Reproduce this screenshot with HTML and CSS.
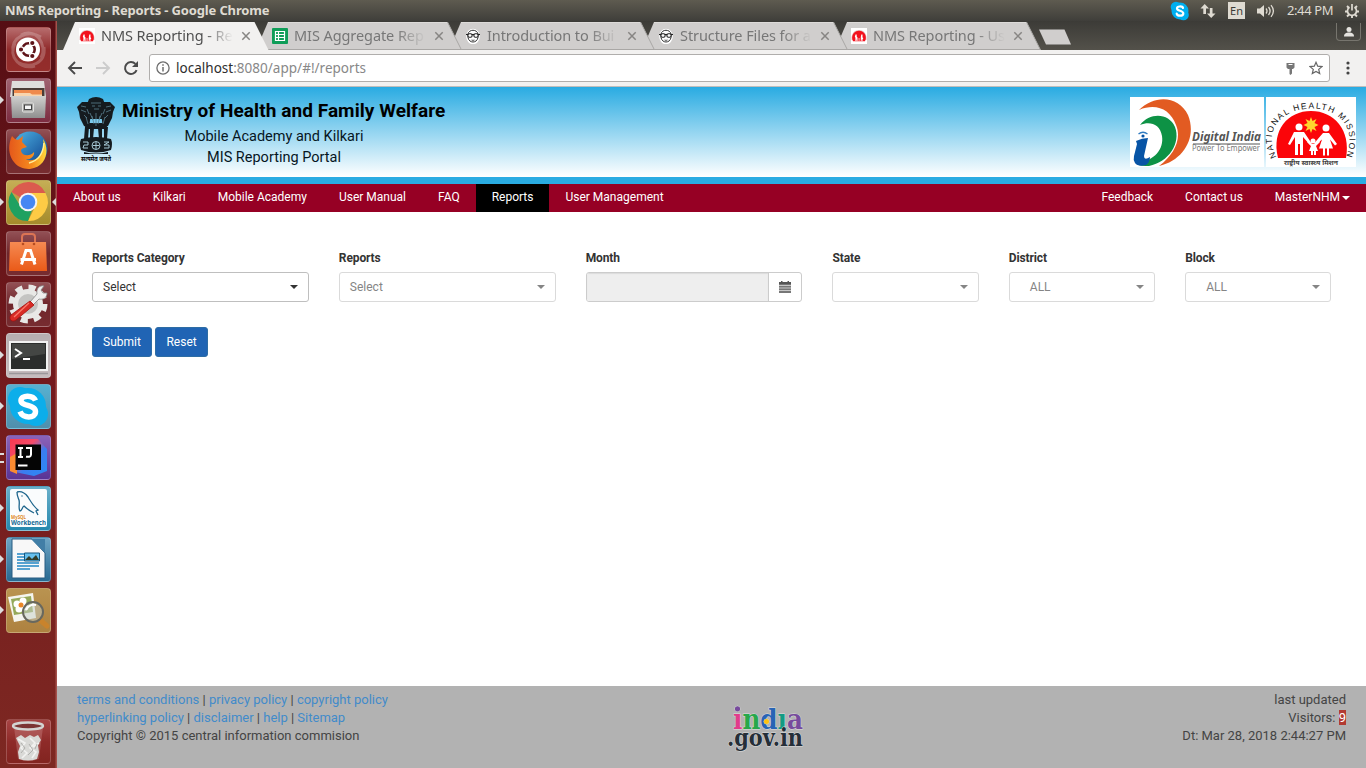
FILE: index.html
```html
<!DOCTYPE html>
<html lang="en">
<head>
<meta charset="utf-8">
<title>NMS Reporting - Reports</title>
<link rel="stylesheet" href="styles.css">
</head>
<body>
<svg class="defs" width="0" height="0" aria-hidden="true">
  <defs>
    <linearGradient id="steel" x1="0" y1="0" x2="0" y2="1"><stop offset="0" stop-color="#d0d0ce"/><stop offset="1" stop-color="#8f8f8f"/></linearGradient>
    <linearGradient id="globe" x1="0" y1="0" x2="1" y2="1"><stop offset="0" stop-color="#50b8e8"/><stop offset="1" stop-color="#0b3a86"/></linearGradient>
    <linearGradient id="fox" x1="0" y1="0" x2="1" y2="0"><stop offset="0" stop-color="#e4581b"/><stop offset=".6" stop-color="#f68a1e"/><stop offset="1" stop-color="#ffd93b"/></linearGradient>
    <linearGradient id="bag" x1="0" y1="0" x2="0" y2="1"><stop offset="0" stop-color="#f58a52"/><stop offset="1" stop-color="#ea5a18"/></linearGradient>
    <linearGradient id="ij" x1="0" y1="0" x2="1" y2="1"><stop offset="0" stop-color="#f8394f"/><stop offset=".35" stop-color="#f54b6a"/><stop offset=".6" stop-color="#3b7cf0"/><stop offset="1" stop-color="#2a8cf5"/></linearGradient>
    <symbol id="nhm-mini" viewBox="0 0 16 16"><path fill="#fff" d="M0 0h16v16H0z"/><path d="M.5 12C0 6 3 2 8 2s8 4 7.500 10z" fill="#e5bcbc"/><path d="M2 13.200C-.5 8 3 2.800 8 2.800S16.500 8 14 13.200z" fill="#f3121d"/><path d="M4.500 6.500h1.200v2l.8 1v3.500H5.700v-2.500L5.200 13h-.8V9.500L3.800 9zM10.300 6.500h1.200v2.500l.8 2-.8.3V13h-.6v-2l-.5 2h-.6V9zM7.700 10h.7V13h-.7z" fill="#fff"/></symbol>
    <symbol id="face" viewBox="0 0 16 16"><ellipse cx="8" cy="8.500" rx="5.800" ry="6.800" fill="#fff" stroke="#fff" stroke-width="2"/><path d="M3 6C4 1 12 1 13 6v3.500c-1 6-9 6-10 0z" fill="#fff" stroke="#333" stroke-width="1"/><path d="M1 6.500h14" stroke="#222" stroke-width="1.100" fill="none"/><rect x="2.900" y="5.800" width="4.200" height="3.400" rx="1.500" fill="#fff" stroke="#222" stroke-width="1.100"/><rect x="8.900" y="5.800" width="4.200" height="3.400" rx="1.500" fill="#fff" stroke="#222" stroke-width="1.100"/><path d="M6.500 12q1.500.8 3 0" stroke="#555" fill="none"/></symbol>
    <symbol id="tab-off" viewBox="0 0 206 28"><path d="M0 28 12 0h179.500L205.500 28z" fill="#d0cecd"/><path d="M0 27.500h205M191.500 0l14 28" stroke="#a9a7a5" fill="none"/><path d="M12 .5h179" stroke="#dddbd9"/></symbol>
    <symbol id="tab-on" viewBox="0 0 206 28"><path d="M0 28 12 0h179.500L205.500 28z" fill="#f2f1f0"/></symbol>
    <symbol id="close" viewBox="0 0 10 10"><path d="m1.300 1.300 7.400 7.400m0-7.400L1.300 8.700" stroke="#878583" stroke-width="1.500"/></symbol>
  </defs>
</svg>

<header class="panel">
  <div class="panel-title">NMS Reporting - Reports - Google Chrome</div>
  <div class="indicators">
    <svg class="ind-skype" viewBox="0 0 20 20"><circle cx="6" cy="6" r="5.300" fill="#00aff0"/><circle cx="13.500" cy="14" r="5.300" fill="#00aff0"/><circle cx="10" cy="10" r="8.500" fill="#00aff0"/><path d="M13 7C12.500 5 7 4.800 7 7.400S13.300 9.600 13.300 12.400C13.300 15.500 7.200 15.200 6.700 12.700" fill="none" stroke="#fff" stroke-width="2.200" stroke-linecap="round"/></svg>
    <svg class="ind-net" viewBox="0 0 16 14"><path d="M4.700 0 9 4.600H6V10H3.300V4.600H.5zM11.200 14 7 9.400h2.800V4h2.700v5.400h3z" fill="#dfdbd2"/></svg>
    <span class="ind-lang">En</span>
    <svg class="ind-vol" viewBox="0 0 18 14"><path d="M0 4.500h3L7 1v12L3 9.500H0z" fill="#dfdbd2"/><path d="M9 4.500q2 2.500 0 5M11.500 3q3.200 4 0 8M14 1.200q4.800 5.800 0 11.600" fill="none" stroke="#dfdbd2" stroke-width="1.300"/></svg>
    <span class="ind-time">2:44 PM</span>
    <svg class="ind-gear" viewBox="0 0 14 14"><path d="M4.500 3.200a4.500 4.500 0 1 0 5 0M7 0v6.500" fill="none" stroke="#dfdbd2" stroke-width="1.700"/><path d="M2 2l2 2m8-2-2 2M0 7.500h2.500m9 0H14M2 12.500l2-2m8 2-2-2M7 12v2" stroke="#dfdbd2" stroke-width="1.900"/></svg>
  </div>
</header>

<div class="desktop">
  <aside class="launcher">
    <div class="tile ubuntu"><svg viewBox="0 0 45 45"><path d="M7 25C5 10 22 2 35 10M38 20c2 17-14 22-27 15M15 8C30 0 42 18 35 31M29 39C14 43 2 30 9 16" stroke="#fff" stroke-opacity=".22" stroke-width="3" fill="none"/><circle cx="22" cy="22.500" r="12" fill="#fff"/><circle cx="22.500" cy="22.500" r="6.200" stroke="#5e1419" stroke-width="2.600" fill="none"/><g fill="#5e1419" stroke="#fff" stroke-width="1.200"><circle cx="15" cy="22.500" r="2.700"/><circle cx="26.300" cy="16" r="2.700"/><circle cx="26.300" cy="29" r="2.700"/></g></svg></div>
    <div class="tile files running"><svg viewBox="0 0 45 45"><path d="M6 3h32l2 16H4z" fill="#dededc"/><path d="M6.500 10h32v9h-32z" fill="#4a3c36"/><path d="M8 12h28v6H8z" fill="#ef8a4c"/><path d="M8 15h16l2 1.500h10V19H8z" fill="#f8d5ae"/><path d="M5 18h35l-1 22H6z" fill="url(#steel)"/><rect x="16.500" y="25" width="11" height="9" rx="1" fill="#a5a5a3" stroke="#e2e2e0"/><rect x="18.500" y="27" width="7" height="4.500" fill="#f5f5f5" stroke="#444"/></svg></div>
    <div class="tile firefox"><svg viewBox="0 0 45 45"><circle cx="24" cy="20" r="17.500" fill="url(#globe)"/><path d="M6 7q2 3 6 4l5-4-1 6 5 5c-3 1-6 1-6 4 1 5 9 6 13 1 1 5-5 9-10 7 12 5 22-5 19-20 7 10 4 28-13 30C8 41-2 24 6 7z" fill="url(#fox)"/><path d="M38 14c-1 12-7 18-15 20" fill="none" stroke="#fff09a" stroke-width="1.500"/></svg></div>
    <div class="tile chrome running focused"><svg viewBox="0 0 45 45"><path d="M22 22 5.500 12A19 19 0 0 1 39.500 13H22z" fill="#db5b4e"/><path d="M22 13h17.500A19 19 0 0 1 22 41L30 25z" fill="#fdcb45"/><path d="M5.500 12 15 27l7 3 5 -3 -5 14A19 19 0 0 1 5.500 12z" fill="#1fa161"/><circle cx="22" cy="22" r="9.300" fill="#f4f4f4"/><circle cx="22" cy="22" r="7.300" fill="#4587f3"/></svg></div>
    <div class="tile software"><svg viewBox="0 0 45 45"><path d="M16 14V6q0-3 3-3h7q3 0 3 3v8" fill="none" stroke="#dc7454" stroke-width="2"/><path d="M4 11h36l1 29H3z" fill="url(#bag)"/><path d="M15.500 33.500 20 19.500h4.500L29 33.500M14.500 28.500h15.500" fill="none" stroke="#fff" stroke-width="3"/><circle cx="17" cy="13" r="1.300" fill="#b74c21"/><circle cx="28" cy="13" r="1.300" fill="#b74c21"/></svg></div>
    <div class="tile settings"><svg viewBox="0 0 45 45"><circle cx="22" cy="22" r="15" fill="#e8e8e6"/><circle cx="22" cy="22" r="16.500" fill="none" stroke="#e8e8e6" stroke-width="6" stroke-dasharray="7 5.960"/><circle cx="22" cy="22" r="10" fill="#c4c4c2"/><path d="m24 20 7-8c-1-6 3-9 7-8l-3 4 2 3h4c0 5-4 7-8 6l-6 6z" fill="#eee" stroke="#888" stroke-width=".8"/><path d="m24 19 4 4-18 15c-4 3-8-1-5-5z" fill="#d82b25" stroke="#a3100f" stroke-width=".8"/><path d="m23 21-15 14" stroke="#f9796a" stroke-width="1.300"/></svg></div>
    <div class="tile terminal running"><svg viewBox="0 0 45 45"><path d="M3 8h39v30H3z" fill="#f1f1f1"/><path d="M5 10h35v26H5z" fill="#2b2d2c"/><path d="M6 11h33v10L6 26z" fill="#444644"/><path d="m9 16 6 4-6 4M17 26h7" fill="none" stroke="#fff" stroke-width="2"/><path d="M3 40.500h39" stroke="#9b979a" stroke-width="1.500"/></svg></div>
    <div class="tile skype running"><svg viewBox="0 0 45 45"><circle cx="14" cy="15" r="12" fill="#0caeea"/><circle cx="30" cy="30" r="12" fill="#0caeea"/><circle cx="22" cy="22" r="18" fill="#0caeea"/><path d="M29.500 16.500C27 10.500 15 11 15 16.500c0 6 14.500 4 14.500 11 0 7.500-13 7-15.500 0" fill="none" stroke="#fff" stroke-width="5.500"/></svg></div>
    <div class="tile idea running two"><svg viewBox="0 0 45 45"><path d="M4 4h28l9 10v22L28 41 4 36z" fill="url(#ij)"/><path d="m4 22 7-4v21l-7-3z" fill="#f98b31"/><path d="M9.500 9.500h25.500v25.500H9.500z" fill="#050505"/><path d="M12 13h5M14.500 13v9M12 22h5M20 13h5v6.500q0 3-5 2.200" fill="none" stroke="#fff" stroke-width="2"/><path d="M12 30.500h9.500" stroke="#fff" stroke-width="2"/></svg></div>
    <div class="tile mysql running"><svg viewBox="0 0 45 45"><rect x="4" y="3" width="37" height="38" rx="2" fill="#fafcfd"/><path d="M11 6c4-1 8 1 11 5 3 5 5 9 10 13l-2 1 2 4M11 6c0 4 1 5 2 8 1 4-1 8 1 11 2 0 2-4 4-5 3 3 6 5 10 7" fill="none" stroke="#1d658c" stroke-width="1.300"/><circle cx="16" cy="10" r=".7" fill="#1d658c"/><text x="5" y="33" class="my" textLength="15" lengthAdjust="spacingAndGlyphs">MySQL</text><text x="5" y="39" class="wb" textLength="35" lengthAdjust="spacingAndGlyphs">Workbench</text></svg></div>
    <div class="tile writer running"><svg viewBox="0 0 45 45"><path d="M6 2h20l13 14v25H6z" fill="#f8f8f8" stroke="#285d82"/><path d="M25 2h14v14z" fill="#417ea6"/><path d="M11 17h7m-7 3h7m-7 3h7m-7 3h22M11 29h22M11 32h13" stroke="#2286c3" stroke-width="1.500"/><path d="M18.500 16h15v8h-15z" fill="#65bfed" stroke="#155881"/><path d="m19 23 4-4 3 3 4-4 3 5z" fill="#313c29"/></svg></div>
    <div class="tile viewer running"><svg viewBox="0 0 45 45"><path d="m2 9 25-4 3 25-22 4z" fill="#f5f5ef"/><path d="m5 11 20-3 2 16-19 3z" fill="#95a95a"/><g fill="#fff"><circle cx="11" cy="16" r="3.500"/><circle cx="17" cy="13" r="3.500"/><circle cx="19" cy="19" r="3.500"/><circle cx="13" cy="21" r="3.500"/></g><circle cx="15" cy="17" r="2.500" fill="#e98728"/><path d="m34 32 7 6" stroke="#c9832c" stroke-width="5" stroke-linecap="round"/><circle cx="27" cy="24" r="10" fill="#c6d0c8" fill-opacity=".5" stroke="#68685f" stroke-width="2"/><path d="M20 22q3-6 10-5" stroke="#fff" stroke-width="2" fill="none"/></svg></div>
    <div class="tile trash"><svg viewBox="0 0 45 45"><path d="M8 8 12 40q10 4 21 0L37 8z" fill="#e7b5b5" fill-opacity=".25"/><path d="m10 19 5-3 4 3 5-3 4 2 4-2 3 5-3 5 1 7-2 7q-9 3-18 0l-1-7 2-6z" fill="#d9d9d6"/><path d="m12 20 7 4-4 5 6 5-5 5m8-20 5 5-5 5 6 4-4 6m7-15-6 4" fill="none" stroke="#f2f2f0" stroke-width="1.600"/><path d="m15 24 4 5-4 5m8-9 4 6-5 5m9-11-2 5" fill="none" stroke="#b0b0ad"/><ellipse cx="22" cy="7" rx="15" ry="3.500" fill="#7b3433" stroke="#d4d4d2" stroke-width="2.300"/></svg></div>
  </aside>

  <div class="browser">
    <div class="tabstrip">
      <div class="tab on t1"><svg class="tab-bg"><use href="#tab-on"/></svg><svg class="fav"><use href="#nhm-mini"/></svg><span class="tab-label">NMS Reporting - Re</span><svg class="x"><use href="#close"/></svg></div>
      <div class="tab t2"><svg class="tab-bg"><use href="#tab-off"/></svg><svg class="fav" viewBox="0 0 16 16"><rect width="16" height="16" rx="1" fill="#0f9d58"/><path d="M3.500 3.500h9v9h-9zM3.500 6.500h9M3.500 9.500h9M6.500 3.500v9" fill="none" stroke="#fff" stroke-width="1.200"/></svg><span class="tab-label">MIS Aggregate Rep</span><svg class="x"><use href="#close"/></svg></div>
      <div class="tab t3"><svg class="tab-bg"><use href="#tab-off"/></svg><svg class="fav"><use href="#face"/></svg><span class="tab-label">Introduction to Bui</span><svg class="x"><use href="#close"/></svg></div>
      <div class="tab t4"><svg class="tab-bg"><use href="#tab-off"/></svg><svg class="fav"><use href="#face"/></svg><span class="tab-label">Structure Files for a</span><svg class="x"><use href="#close"/></svg></div>
      <div class="tab t5"><svg class="tab-bg"><use href="#tab-off"/></svg><svg class="fav"><use href="#nhm-mini"/></svg><span class="tab-label">NMS Reporting - Us</span><svg class="x"><use href="#close"/></svg></div>
      <svg class="newtab" viewBox="0 0 34 16"><path d="M1 .5h25.500L33 15.500H8z" fill="#d0cecd"/></svg>
      <div class="profile"><svg viewBox="0 0 12 12"><circle cx="6" cy="3.500" r="2.500" fill="#e5e3df"/><path d="M1 10.500c0-3 2-4 5-4s5 1 5 4z" fill="#e5e3df"/></svg></div>
    </div>
    <div class="toolbar">
      <svg class="back" viewBox="0 0 16 16"><path d="M15 8H2m6-6L2 8l6 6" fill="none" stroke="#4a4a4a" stroke-width="1.900"/></svg>
      <svg class="fwd" viewBox="0 0 16 16"><path d="M1 8h13M8 2l6 6-6 6" fill="none" stroke="#ccc" stroke-width="1.900"/></svg>
      <svg class="reload" viewBox="0 0 16 16"><path d="M13.600 10.200a6 6 0 1 1-1.200-6.300" fill="none" stroke="#4a4a4a" stroke-width="2"/><path d="M15 1v6H9z" fill="#4a4a4a"/></svg>
      <div class="omnibox">
        <svg class="info" viewBox="0 0 14 14"><circle cx="7" cy="7" r="6.100" fill="none" stroke="#6d6d6d" stroke-width="1.300"/><path d="M7 6v4.500M7 3.300v1.500" stroke="#6d6d6d" stroke-width="1.500"/></svg>
        <span class="url"><b>localhost</b>:8080/app/#!/reports</span>
        <svg class="key" viewBox="0 0 9 13"><path d="M.5 1h8v4.500L7 7H6v4.500L4.500 13 3.500 12V7H2L.5 5.500z" fill="#777"/><path d="M2.500 2.500h4" stroke="#fff"/></svg>
        <svg class="star" viewBox="0 0 14 14"><path d="m7 1.300 1.700 3.900 4.200.4-3.200 2.800 1 4.200L7 10.400l-3.700 2.200 1-4.200L1.100 5.600l4.200-.4z" fill="none" stroke="#666" stroke-width="1.200"/></svg>
      </div>
      <svg class="menu" viewBox="0 0 4 14"><g fill="#444"><circle cx="2" cy="2" r="1.600"/><circle cx="2" cy="7" r="1.600"/><circle cx="2" cy="12" r="1.600"/></g></svg>
    </div>

    <main class="page">
      <div class="masthead">
        <svg class="emblem" viewBox="0 0 38 66"><g fill="#151b1f"><path d="M12 2q7-4 14 0l3 8-2 12H11L9 10z"/><path d="M11 5 5 5 0 10l2 5 1 6 4 8 5 2 2-15zM27 5l6 0 5 5-2 5-1 6-4 8-5 2-2-15z"/><path d="M7 26h24l-2 6H9z"/><path d="M8 30h4l-1 12H7zM13 31h4l-1 11h-3zM21 31h4v11h-3zM27 30h4l-1 12h-3z"/><path d="M4 42q15-4 30 0 2 5 0 11-15 5-30 0-2-6 0-11zM7 55q12 3 24 0v2H7z"/></g><g fill="none" stroke="#5a8291" stroke-width=".8"><path d="M14 6h10M15 9h3m3 0h3M17 12h5M4 9l5 1M4 13l5 2M34 9l-5 1m5 3-5 2M13 16l3 7m9-7-3 7M19 16v13M9 20l2 7m17-7-2 7M7 18l3 3m21-3-3 3M15 19l2 8m6-8-2 8M10 12l2 5m16-5-2 5"/></g><g stroke="#a7c9d5" fill="none"><circle cx="19" cy="48.500" r="4"/><path d="M19 45v7m-3.500-3.500h7M6 45h5v3H7l-1 3h5M27 45h5l-5 3h5v3h-5"/></g><text x="4" y="63.500" textLength="30" lengthAdjust="spacingAndGlyphs" class="hindi motto">सत्यमेव जयते</text></svg>
        <div class="brand"><div class="brand-title">Ministry of Health and Family Welfare</div><div class="brand-sub s1">Mobile Academy and Kilkari</div><div class="brand-sub s2">MIS Reporting Portal</div></div>
        <div class="logos">
          <svg class="digital" viewBox="0 0 134 70"><path d="M0 0h134v70H0z" fill="#fff"/><path d="M9 13C25-3 49-1 58 18c9 22-4 45-29 51 15-11 23-27 17-41C40 12 26 6 9 13z" fill="#e25b22"/><path d="M10 28C20 15 39 16 45 30c6 16-6 35-26 39-5 0-9 0-12-2 18-4 27-15 25-28-2-12-12-15-22-11z" fill="#0d9245"/><path d="M6 44q6-3 12-3l-4 18q0 5 6 1 0 5-4 8-8 2-11-2-2-3-1-7l3-12z" fill="#0754a6"/><circle cx="13" cy="39" r="1.600" fill="#0754a6"/><path d="M8.500 37q4.500-3.500 9 0" fill="none" stroke="#2f7ac0" stroke-width="1.300"/><text x="62" y="44" class="di" textLength="69" lengthAdjust="spacingAndGlyphs">Digital India</text><path d="M63 47h67" stroke="#555"/><text x="62" y="54" class="pe" textLength="68" lengthAdjust="spacingAndGlyphs">Power To Empower</text></svg>
          <svg class="nhm" viewBox="0 0 90 70"><path d="M0 0h90v70H0z" fill="#fff"/><path d="M12 61C5 33 22 14 45 14s40 19 35 47z" fill="#fb0509"/><path id="arc" d="M10.500 60C-4 32 17 11.500 46 11.500s46 22 33 50" fill="none"/><text class="arc"><textPath href="#arc" textLength="146" lengthAdjust="spacing">NATIONAL HEALTH MISSION</textPath></text><path d="m45 20 1.500 4 4-2-2 4 4 2-4 2 2 4-4-2-1.500 4-1.500-4-4 2 2-4-4-2 4-2-2-4 4 2z" fill="#ffd52d"/><g fill="#fff"><circle cx="33" cy="30" r="3.500"/><path d="M28 35h10l8 12-1.500 1.500L37 40v18h-3V47h-2v11h-3V40l-5 8-2-1z"/><circle cx="60" cy="31" r="3.500"/><path d="M57 36h6l8 11-2 1.500-5-6 3 9h-4v7h-2v-7h-2v7h-2v-7h-4l3-9-6 5-2-1z"/><circle cx="47" cy="44" r="2.500"/><path d="M44.500 47h5l4-3 .5 1-4 4 2 5h-2v4h-2v-4h-1v4h-2v-4h-2l2-5-4-4 1-1z"/></g><text x="18" y="67.500" class="hindi nh" textLength="54" lengthAdjust="spacingAndGlyphs">राष्ट्रीय स्वास्थ्य मिशन</text></svg>
        </div>
      </div>
      <nav class="nav"><a>About us</a><a>Kilkari</a><a>Mobile Academy</a><a>User Manual</a><a>FAQ</a><a class="active">Reports</a><a>User Management</a><span class="spacer"></span><a>Feedback</a><a>Contact us</a><a>MasterNHM<i class="caret"></i></a></nav>
      <section class="content">
        <form class="filters">
          <div class="field"><label>Reports Category</label><div class="select"><span>Select</span><i class="caret"></i></div></div>
          <div class="field"><label>Reports</label><div class="select off"><span>Select</span><i class="caret"></i></div></div>
          <div class="field"><label>Month</label><div class="date"><div class="date-input"></div><div class="date-btn"><svg viewBox="0 0 12 12"><path d="M0 1h12v11H0z" fill="#777"/><path d="M2 0h1.500v1H2zM8.500 0H10v1H8.500zM0 1h12v2H0z" fill="#555"/><path d="M0 4.500h12M0 7h12M0 9.500h12" stroke="#ddd" stroke-width=".8"/></svg></div></div></div>
          <div class="field"><label>State</label><div class="select off"><span></span><i class="caret"></i></div></div>
          <div class="field"><label>District</label><div class="select off all"><span>ALL</span><i class="caret"></i></div></div>
          <div class="field"><label>Block</label><div class="select off all"><span>ALL</span><i class="caret"></i></div></div>
        </form>
        <div class="actions"><button>Submit</button><button>Reset</button></div>
      </section>
      <footer class="foot">
        <div class="foot-left"><div><a>terms and conditions</a> | <a>privacy policy</a> | <a>copyright policy</a></div><div><a>hyperlinking policy</a> | <a>disclaimer</a> | <a>help</a> | <a>Sitemap</a></div><div>Copyright © 2015 central information commision</div></div>
        <svg class="india" viewBox="0 0 80 50"><g class="ind"><text x="6" y="23" textLength="70" lengthAdjust="spacingAndGlyphs"><tspan fill="#e13c8b">ı</tspan><tspan fill="#27a84a">n</tspan><tspan fill="#2864b5">d</tspan><tspan fill="#129b83">ı</tspan><tspan fill="#774b9d">a</tspan></text><circle cx="10.500" cy="2.800" r="2.600" fill="#774b9d"/><circle cx="39.500" cy="15.500" r="2.500" fill="#ffc20e"/><text class="gov" x="0" y="40" fill="#252e38" textLength="76" lengthAdjust="spacingAndGlyphs">.gov.in</text></g></svg>
        <div class="foot-right"><div>last updated</div><div>Visitors: <mark>9</mark></div><div>Dt: Mar 28, 2018 2:44:27 PM</div></div>
      </footer>
    </main>
  </div>
</div>
</body>
</html>
```
FILE: styles.css
```css
* { box-sizing: border-box; }
body { margin: 0; width: 1366px; height: 768px; overflow: hidden; display: flex; flex-direction: column; font-family: Roboto, sans-serif; font-size: 12px; color: #333; background: #fff; }
svg { display: block; flex: none; }
.defs { position: absolute; }

.panel { height: 21px; flex: none; display: flex; align-items: center; justify-content: space-between; padding: 0 7px 0 5px; background: linear-gradient(#5e5b50, #3f3e3a); color: #dfdbd2; font-family: "Noto Sans", sans-serif; }
.panel-title { font-weight: 700; font-size: 13px; letter-spacing: -.15px; line-height: 21px; height: 21px; }
.indicators { display: flex; align-items: center; font-size: 13px; }
.ind-skype { width: 20px; height: 20px; margin-right: 10px; }
.ind-net { width: 16px; height: 14px; margin-right: 12px; }
.ind-lang { width: 17px; height: 17px; background: #dfdbd2; color: #3c3b37; font-size: 11px; line-height: 17px; text-align: center; margin-right: 12px; }
.ind-vol { width: 18px; height: 14px; margin-right: 12px; }
.ind-time { width: 47px; white-space: nowrap; letter-spacing: -.4px; line-height: 19px; margin-right: 11px; }
.ind-gear { width: 14px; height: 14px; }

.desktop { flex: 1; display: flex; min-height: 0; }
.launcher { width: 57px; flex: none; display: flex; flex-direction: column; gap: 6px; padding: 6px 0 4px 6px; background: linear-gradient(90deg, transparent 55px, #a4514b 56px), linear-gradient(#560e14, #741a1d 50%, #7d2822); }
.tile { width: 45px; height: 45px; flex: none; border-radius: 4px; border: 1px solid rgba(255,255,255,.2); position: relative; background: linear-gradient(#925055, #6f262b 50%, #772c30); }
.tile svg { width: 45px; height: 45px; margin: -1px; }
.tile.ubuntu { background: linear-gradient(#b76c6d, #902b2b 50%, #942d2b); }
.tile.files { background: linear-gradient(#9f6371, #7c2c40); }
.tile.chrome { background: linear-gradient(#c5ae55, #a58b2b); }
.tile.terminal { background: linear-gradient(#b6aeb0, #c6bcbe); }
.tile.skype { background: linear-gradient(#56b1d1, #508fac); }
.tile.idea { background: linear-gradient(#8b62b8, #593495); }
.tile.mysql { background: linear-gradient(#6ab0ca, #2588ae); }
.tile.writer { background: linear-gradient(#6ea5c4, #286991); }
.tile.viewer { background: linear-gradient(#b99350, #ae8240); }
.tile.trash { margin-top: auto; background: linear-gradient(#a74444, #8e2b29 50%, #822420); }
.running::before { content: ""; position: absolute; left: -7px; top: 17px; border: 4px solid transparent; border-left-color: #ddd; border-right: 0; }
.two::before { border: 0; width: 4px; height: 6px; border-top: 2px solid #ddd; border-bottom: 2px solid #ddd; }
.focused::after { content: ""; position: absolute; right: -6px; top: 17px; border: 4px solid transparent; border-right-color: #ddd; border-left: 0; }

.browser { flex: 1; min-width: 0; display: flex; flex-direction: column; }
.tabstrip { height: 29px; flex: none; display: flex; align-items: flex-end; padding-left: 6px; background: linear-gradient(#3c3b37, #53514a); font-family: "Noto Sans", sans-serif; }
.tab { width: 193px; height: 28px; flex: none; position: relative; display: flex; align-items: center; padding-left: 16px; color: #777; isolation: isolate; }
.tab-bg { position: absolute; left: 0; top: 0; width: 206px; height: 28px; z-index: -1; }
.t1 { z-index: 5; color: #505050; }
.t2 { z-index: 4; }
.t3 { z-index: 3; }
.t4 { z-index: 2; }
.t5 { z-index: 1; }
.fav { width: 16px; height: 16px; }
.tab-label { width: 134px; margin-left: 6px; white-space: nowrap; font-size: 14.500px; letter-spacing: -.08px; line-height: 27px; height: 28px; -webkit-mask-image: linear-gradient(90deg, #000 102px, transparent 132px); mask-image: linear-gradient(90deg, #000 102px, transparent 132px); }
.x { width: 10px; height: 10px; margin-left: 6px; }
.newtab { width: 34px; height: 16px; margin: 0 0 5px 10px; }
.profile { width: 25px; height: 18px; margin: 0 5px 9px auto; border: 1px solid #77756e; border-top: 0; border-radius: 0 0 4px 4px; display: flex; align-items: center; justify-content: center; }
.profile svg { width: 12px; height: 12px; }

.toolbar { height: 37px; flex: none; display: flex; align-items: center; background: #f2f1f0; border-bottom: 1px solid #c0bebc; padding-left: 10px; }
.back { width: 16px; height: 16px; }
.fwd { width: 16px; height: 16px; margin-left: 12px; }
.reload { width: 16px; height: 16px; margin-left: 12px; }
.omnibox { width: 1181px; height: 28px; margin-left: 10px; border: 1px solid #b0aeac; border-radius: 3px; background: #fff; display: flex; align-items: center; padding: 0 6px; font-family: "Noto Sans", sans-serif; }
.info { width: 14px; height: 14px; }
.url { flex: 1; margin-left: 6px; font-size: 13.500px; letter-spacing: .02px; line-height: 24px; color: #888; white-space: nowrap; }
.url b { font-weight: 400; color: #2e2e2e; }
.key { width: 9px; height: 13px; margin-right: 14px; }
.star { width: 14px; height: 14px; }
.menu { width: 4px; height: 14px; margin-left: 16px; }

.page { flex: 1; display: flex; flex-direction: column; min-height: 0; }
.masthead { height: 97px; flex: none; display: flex; align-items: flex-start; padding: 10px 10px 0 20px; border-bottom: 7px solid #29abe2; background: linear-gradient(#29abe2, #fff); }
.emblem { width: 38px; height: 66px; overflow: visible; }
.hindi { font-family: "Noto Sans", sans-serif; font-weight: 700; }
.motto { font-size: 7px; }
.brand { margin-left: 7px; color: #06161f; white-space: nowrap; }
.brand-title { font-size: 19px; font-weight: 700; letter-spacing: .07px; line-height: 28px; color: #000; width: 325px; }
.brand-sub { width: 304px; text-align: center; font-size: 14.500px; line-height: 20px; }
.s1 { padding-top: 2px; }
.s2 { padding-top: 1px; }
.logos { margin-left: auto; display: flex; gap: 2px; }
.digital { width: 134px; height: 70px; }
.nhm { width: 90px; height: 70px; overflow: visible; }
.di { font: italic 700 12px "Noto Sans", sans-serif; fill: #555; }
.pe { font: 8px "Noto Sans", sans-serif; fill: #777; }
.arc { font: 8.500px "Liberation Sans", sans-serif; fill: #111; }
.nh { font-size: 7px; fill: #444; }
.my { font: 700 5px "Noto Sans", sans-serif; fill: #e08a1e; }
.wb { font: 700 7px "Noto Sans", sans-serif; fill: #176b95; }

.nav { height: 28px; flex: none; display: flex; background: #960024; color: #fff; line-height: 26px; }
.nav a { padding: 0 16px; white-space: nowrap; }
.nav .active { background: #000; }
.spacer { flex: 1; }
.caret { display: inline-block; border: 4px solid transparent; border-top-color: currentColor; border-bottom: 0; vertical-align: middle; }
.nav .caret { margin-left: 2px; }

.content { flex: 1; padding: 36px 35px 0; }
.filters { display: grid; grid-template-columns: repeat(3, 216.840px) repeat(3, 146.330px); column-gap: 30px; }
.field { min-width: 0; }
.field label { display: block; font-weight: 700; line-height: 18px; margin: 1px 0 5px; letter-spacing: -.12px; }
.select { height: 30px; border: 1px solid #bfbfbf; border-radius: 3px; display: flex; align-items: center; justify-content: space-between; padding: 0 10px; color: #333; background: #fff; }
.select.off { color: #858585; border-color: #dadada; }
.select.all { padding-left: 20px; }
.date { height: 30px; display: flex; border: 1px solid #ccc; border-radius: 3px; overflow: hidden; }
.date-input { flex: 1; background: #eee; border-right: 1px solid #ccc; box-shadow: inset 0 1px 1px rgba(0,0,0,.08); }
.date-btn { width: 32px; padding-right: 1px; display: flex; align-items: center; justify-content: center; }
.date-btn svg { width: 12px; height: 12px; }
.actions { display: flex; gap: 3px; margin-top: 25px; }
button { height: 30px; padding: 0 10.600px 0 10px; border: 1px solid #2e6da4; border-radius: 3px; background: #2064b4; color: #fff; font: 12px Roboto, sans-serif; }

.foot { height: 82px; flex: none; display: grid; grid-template-columns: 650px 80px 1fr; background: #b2b2b2; padding: 5px 20px 0; font-size: 13px; line-height: 18px; color: #444; }
.foot a { color: #428bca; }
.india { width: 80px; height: 50px; margin-top: 15px; overflow: visible; }
.ind { font: 700 28px "DejaVu Serif", serif; paint-order: stroke; stroke: #ddd; stroke-width: 1px; }
.gov { font-size: 25px; }
.foot-right { text-align: right; }
mark { background: #b23b32; color: #fff; }
```
